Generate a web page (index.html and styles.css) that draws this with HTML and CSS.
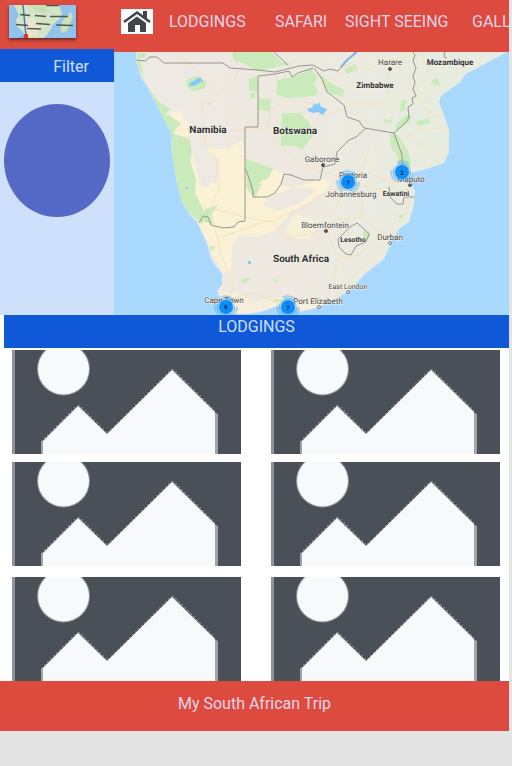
FILE: index.html
```html
<!DOCTYPE html>
<html lang="en">
<head>
<meta charset="utf-8">
<meta name="viewport" content="width=device-width, initial-scale=1">
<title>My South African Trip</title>
<link rel="stylesheet" href="styles.css">
</head>
<body>
<svg class="defs" aria-hidden="true">
  <symbol id="placeholder" viewBox="0 0 229 104" preserveAspectRatio="none">
    <rect width="229" height="104" fill="#4a5057"/>
    <rect width="3" height="104" fill="#8b959b"/>
    <circle cx="51.500" cy="19" r="26.500" fill="#8b9399"/>
    <circle cx="51.500" cy="19" r="25.500" fill="#f8f9fb"/>
    <path d="M29 104V91H32V104ZM202 104V62L206 64V104Z" fill="#9da5aa"/>
    <path d="M30 104V90H32V87H35V84H38V81H41V78H44V75H47V72H50V69H53V66H56V63H59V60H62V57H65V55H68V57H71V60H74V63H77V66H80V69H83V72H86V75H89V78H92V81H95V83H96V81H99V78H102V75H105V72H108V69H111V66H114V63H117V60H120V57H123V54H126V51H129V48H132V45H135V42H138V39H141V36H144V33H147V30H150V27H153V24H156V21H159V19H162V21H165V24H168V27H171V30H174V33H177V36H180V39H183V42H186V45H189V48H192V51H195V54H198V57H201V60H203V104Z" fill="#9da5aa" opacity=".5"/>
    <path d="M31 104V91L66 56L95 84L160 20L203 62V104Z" fill="#f8f9fb"/>
  </symbol>
  <symbol id="cluster" viewBox="-12 -12 24 24">
    <circle r="11" fill="none" stroke="#48aaf5" stroke-width="1.500" stroke-dasharray="13 10" opacity=".5"/>
    <circle r="9" fill="#55b2f8" opacity=".45"/>
    <circle r="9" fill="none" stroke="#279cf8" stroke-dasharray="12 7" opacity=".6"/>
    <circle r="7" fill="#0d8dfb"/>
  </symbol>
</svg>
<div class="page">
  <header class="header">
    <a class="logo" href="#" aria-label="My South African Trip">
      <svg viewBox="0 0 67 33" aria-hidden="true">
        <rect width="67" height="33" fill="#90c4ee"/>
        <path d="M5 0H50L53 9L51 14L44 19L42 24L37 31L34 33H17L14 27L8 21L7 15L10 10Z" fill="#d5e4c6"/>
        <path d="M16 12L25 14L31 21L28 30L20 32L14 23Z" fill="#ebe7cf"/>
        <path d="M19 0H35L40 7L30 8Z" fill="#c3dfb4"/>
        <path d="M62 7L64 12L58 26L54 28L51 24L54 15Z" fill="#cde0b6"/>
        <path d="M14 0L17 31" stroke="#467eac" stroke-width="1.500"/>
        <path d="M16 31L9 33" stroke="#6ea4cc"/>
        <circle cx="17" cy="31" r="2.300" fill="#d9302c"/>
        <g fill="none" stroke="#36433f" stroke-width="1.300" opacity=".85">
          <path d="M11 9.500L21 10.500M26 10.500L37 11.500M41 11.500L59 11.500M7 19.500L19 20.500M27 18.500L41 19.500M18 23.500L32 24M47 20L64 20.500M37 .5H50"/>
        </g>
      </svg>
    </a>
    <a class="home" href="#" aria-label="Home">
      <svg viewBox="0 0 32 25" aria-hidden="true">
        <path d="M3 13L16 3.500L29 13" fill="none" stroke="#40464c" stroke-width="2.600"/>
        <path d="M22 2H26V10L22 7Z" fill="#40464c"/>
        <path d="M7 14L16 7.500L25 14V23H19V16H14V23H7Z" fill="#40464c"/>
      </svg>
    </a>
    <nav class="nav" aria-label="Main">
      <a href="#lodgings">LODGINGS</a>
      <a href="#">SAFARI</a>
      <a href="#">SIGHT SEEING</a>
      <a href="#">GALL</a>
    </nav>
  </header>
  <main>
    <div class="explore">
      <aside class="sidebar">
        <h2 class="filter-title">Filter</h2>
        <div class="filter-disc"></div>
      </aside>
      <svg class="map" viewBox="114 52 395 263" preserveAspectRatio="xMidYMid slice" role="img" aria-label="Map of southern Africa">
        <defs>
          <clipPath id="land"><path d="M136 50V60L141 77L148 88L157 105L172 135L171 147L177 183L182 202L189 214L197 222L206 241L212 261L222 274V284L217 291L221 299L218 309L229 314H248L261 312L274 307H294L300 312L319 307L335 299L349 291L365 274L384 259L392 241L399 229L409 222L414 204L415 191L409 181L415 172L430 168L444 163L449 152V130L444 115L439 102L441 96L459 83L466 74L479 67L509 51Z"/></clipPath>
          <linearGradient id="terrain" x1="0" x2="1"><stop offset="0" stop-color="#eee9e2"/><stop offset=".5" stop-color="#ede9e1"/><stop offset=".8" stop-color="#e8ecdf"/></linearGradient>
        </defs>
        <rect x="114" y="52" width="395" height="263" fill="#a9d9fe"/>
        <g clip-path="url(#land)">
          <rect x="114" y="52" width="395" height="263" fill="url(#terrain)"/>
          <g fill="#fbf2d6">
            <path d="M171 112L181 111L184 120L190 123L187 131L193 136L175 137Z"/>
            <path d="M191 145L195 163L199 181L217 184L220 159L208 152L206 148L229 149L242 140L245 157L268 169L284 173L280 185L292 188L305 184L320 178L331 181L326 190L308 203L289 214L273 232L252 237L240 235L232 246L231 270L223 273L208 245L197 221L192 200Z"/>
            <path d="M218 293H239L254 302L278 297L299 303L318 300L340 295L318 310H270L220 316Z" opacity=".6"/>
            <path d="M295 214L320 222L309 239L294 239L285 230Z" opacity=".7"/>
          </g>
          <g fill="#ede8e1"><path d="M203 173L210 180L208 188L200 185ZM269 197L293 188L317 189L301 203L280 211L264 205Z"/></g>
          <g fill="#c9eab9">
            <path d="M136 60H140L145 84L160 103L171 109L165 114L181 123L173 133L189 139L192 151L190 161L196 179L195 193L207 217L202 224L178 204L168 138L149 93Z"/>
            <path d="M137 53H147L144 58H137ZM232 52H272L281 62L292 64L258 71L243 63L234 61ZM187 79L197 76L207 81L204 89L192 91L186 86Z"/>
            <path d="M249 79L257 76V92L249 90ZM259 98L271 99L270 111L258 110ZM250 93H255V98H250ZM277 80L294 77L311 69L318 78L314 84L318 92L315 96L303 97L286 98L276 94Z"/>
            <path d="M282 113H300L308 121L314 134L302 150L296 146H281ZM245 158L273 169L269 177L259 183L258 189L247 185ZM316 71L331 83L344 90L343 96L330 94Z"/>
            <path d="M344 69L355 64L358 69L347 74ZM433 79L438 78L440 86L431 84ZM401 102L406 99L405 110L400 112ZM396 124L408 114L412 116L409 123L396 131ZM416 122L428 118L430 123L418 126ZM384 119L392 120L391 124L384 122ZM390 134L398 135L408 151L411 164L407 176L400 170L398 157L391 147Z"/>
            <path d="M245 184H262L255 197L249 192ZM205 209L218 205L211 215L213 224L205 222ZM210 246H215L213 251L209 249ZM241 280L250 277L248 282L242 283ZM272 279L280 281L276 283ZM363 231L370 232L370 238L363 240ZM274 299L288 300L283 303L274 302ZM399 214L404 215L402 219L398 217ZM207 103L211 102L208 106Z"/>
          </g>
          <g fill="#86c9f6"><path d="M190 83L200 77L203 81L194 86L189 86ZM308 108H312L314 103L317 105L319 102L321 107L327 109L323 115L318 112L313 113L308 111ZM248 261H251V264H248ZM186 187H188V189H186Z"/></g>
          <g fill="none" stroke="#f4e3bc" stroke-width="1">
            <path d="M176 52L191 65L203 79L215 93L202 104V131L207 147L217 159L219 188L211 207L213 220L221 255L234 286"/>
            <path d="M240 69L229 87L214 96M178 131L196 126L204 133L267 128L271 110L287 100L313 104M267 128L285 150L305 166L322 171L347 180L369 173L391 182"/>
            <path d="M215 209L244 217L270 222L312 202L347 183M218 238L270 220L286 239L326 230L337 205L347 183L364 165L370 143"/>
            <path d="M327 231L336 220L361 217L388 239M327 231L337 258L334 283L349 289M326 230L308 255L286 278L268 298M337 258L359 255L386 230"/>
            <path d="M321 85L333 80L345 66L370 69L389 60L406 74L414 94L431 103M330 116L350 104L389 104L393 119M360 110L363 119L373 131M388 71L389 104"/>
            <path d="M389 60L421 55L430 72L415 92L426 110L447 121M408 134L432 128L449 130M408 134L423 147L447 155M347 181L363 196L361 217M348 183L384 190L403 176"/>
            <path d="M220 302L252 293L275 302L307 299M234 286L225 307M347 183L339 160L324 145M408 134L395 157L408 182L406 212L386 243L360 269L333 299"/>
          </g>
          <g fill="none" stroke="#96958f" stroke-width="1">
            <path d="M136 60L145 61L150 57H157L164 63H223L230 68L244 69L258 70L275 72L299 66L313 65M273 51L288 65M258 76L275 74L289 71L292 77L298 73L313 68"/>
            <path d="M313 65L324 71L330 69L338 71L346 62L356 51M314 68L322 79L327 92L344 105L347 117L359 121L364 128L382 131L394 133L404 124L409 118L408 107L413 104L412 98L416 96L413 89L415 82L413 76L416 68L413 61L415 55L412 51"/>
            <path d="M258 76V127H245V221L238 222L234 227L223 228L211 225L208 217L203 216L199 223"/>
            <path d="M365 129L356 137L349 140L337 152L335 164L323 167L320 180L304 180L291 175L284 174L281 184L275 193L267 197H253V191L249 178L245 168M394 133L402 155L403 175"/>
            <path d="M389 187L390 197L397 204L403 204L404 197H415M338 239L350 227L357 223L363 228L369 234L366 242L356 246L351 255L346 254L339 247Z"/>
            <path d="M445 51L444 57L447 58"/>
          </g>
          <path d="M341 67L347 60L357 52" fill="none" stroke="#79b7ed" stroke-width="2"/>
        </g>
        <g fill="#555" stroke="#555">
          <circle cx="390" cy="69" r="1.500"/><circle cx="323" cy="165" r="1.500"/><circle cx="326" cy="231" r="1.500"/><circle cx="410" cy="185" r="1.500"/>
          <g fill="#eee" stroke-width=".7"><circle cx="390" cy="243" r="1.500"/><circle cx="348" cy="292" r="1.500"/><circle cx="319" cy="307" r="1.500"/></g>
        </g>
        <g class="country">
          <text x="208" y="133">Namibia</text>
          <text x="295" y="134">Botswana</text>
          <text x="301" y="262">South Africa</text>
        </g>
        <g class="country country-small">
          <text x="375" y="88">Zimbabwe</text>
          <text x="450" y="65">Mozambique</text>
        </g>
        <g class="country country-tiny">
          <text x="396" y="196">Eswatini</text>
          <text x="353" y="242">Lesotho</text>
        </g>
        <g class="city">
          <text x="390" y="65">Harare</text>
          <text x="322" y="162">Gaborone</text>
          <text x="353" y="178">Pretoria</text>
          <text x="411" y="182">Maputo</text>
          <text x="351" y="197">Johannesburg</text>
          <text x="325" y="228">Bloemfontein</text>
          <text x="390" y="240">Durban</text>
          <text x="224" y="303">Cape Town</text>
          <text x="318" y="304">Port Elizabeth</text>
        </g>
        <g class="city city-small"><text x="348" y="289">East London</text></g>
        <g class="clusters">
          <use href="#cluster" x="336" y="170" width="24" height="24"/><text x="348" y="185">7</text>
          <use href="#cluster" x="390" y="160" width="24" height="24"/><text x="402" y="175">2</text>
          <use href="#cluster" x="214" y="295" width="24" height="24"/><text x="226" y="309">6</text>
          <use href="#cluster" x="276" y="295" width="24" height="24"/><text x="288" y="310">7</text>
        </g>
      </svg>
    </div>
    <section class="lodgings" id="lodgings">
      <h1 class="section-title">LODGINGS</h1>
      <div class="cards">
        <svg class="card" role="img" aria-label="Lodging"><use href="#placeholder"/></svg>
        <svg class="card" role="img" aria-label="Lodging"><use href="#placeholder"/></svg>
        <svg class="card" role="img" aria-label="Lodging"><use href="#placeholder"/></svg>
        <svg class="card" role="img" aria-label="Lodging"><use href="#placeholder"/></svg>
      </div>
      <div class="cards cards-more">
        <svg class="card" role="img" aria-label="Lodging"><use href="#placeholder"/></svg>
        <svg class="card" role="img" aria-label="Lodging"><use href="#placeholder"/></svg>
      </div>
    </section>
  </main>
  <footer class="footer">My South African Trip</footer>
</div>
</body>
</html>
```
FILE: styles.css
```css
* {
  box-sizing: border-box;
}

body {
  margin: 0;
  background: #e4e4e4;
  color: #e6d3ea;
  font: 16px/24px Roboto, sans-serif;
}

.defs {
  position: absolute;
  width: 0;
  height: 0;
}

.page {
  margin-right: 3px;
  background: #fff;
}

.header {
  display: flex;
  align-items: flex-start;
  height: 52px;
  padding-left: 9px;
  overflow: hidden;
  background: #dc4b3e;
}

.logo {
  flex: none;
  width: 67px;
  height: 33px;
  margin: 5px 45px 0 0;
  box-shadow: 0 2px 3px #6b2923;
}

.home {
  flex: none;
  width: 32px;
  height: 25px;
  margin: 9px 16px 0 0;
  background: #fff;
}

.logo svg,
.home svg {
  display: block;
  width: 100%;
  height: 100%;
}

.nav {
  display: grid;
  flex: 1;
  grid-template-columns: 106px 70px 127px 1fr;
  min-width: 0;
  padding-top: 10px;
  white-space: nowrap;
}

.nav a {
  color: inherit;
  text-decoration: none;
}

.explore {
  display: flex;
}

.sidebar {
  flex: none;
  width: 114px;
  margin-top: -3px;
  background: #cfe0fc;
}

.filter-title,
.section-title {
  margin: 0;
  background: #0f58d8;
  color: #cfe0fc;
  font-size: 16px;
  font-weight: 400;
}

.filter-title {
  height: 33px;
  padding: 6px 25px 0 0;
  text-align: right;
}

.filter-disc {
  width: 106px;
  height: 113px;
  margin: 22px auto 0;
  border-radius: 50%;
  background: #5468c6;
}

.map {
  display: block;
  flex: 1;
  min-width: 0;
  aspect-ratio: 395 / 263;
  text-rendering: geometricPrecision;
}

.map text {
  fill: #454545;
  stroke: #f5f3ec;
  stroke-width: 1px;
  paint-order: stroke;
  text-anchor: middle;
}

.map .country text {
  fill: #303030;
  font-size: 10px;
  font-weight: 700;
}

.map .country-small text {
  font-size: 8px;
}

.map .country-tiny text {
  font-size: 7px;
}

.map .city text {
  font-size: 8px;
}

.map .city-small text {
  font-size: 7px;
}

.map .clusters text {
  fill: #0b2440;
  stroke: none;
  font-size: 6px;
  font-weight: 700;
}

.section-title {
  height: 33px;
  margin-left: 4px;
  text-align: center;
}

.cards {
  display: grid;
  grid-template-columns: 1fr 1fr;
  gap: 8px 30px;
  padding: 2px 9px 0 12px;
}

.cards-more {
  padding-top: 11px;
}

.card {
  display: block;
  width: 100%;
  aspect-ratio: 229 / 104;
}

.footer {
  height: 50px;
  padding-top: 11px;
  background: #dc4b3e;
  text-align: center;
}
```
